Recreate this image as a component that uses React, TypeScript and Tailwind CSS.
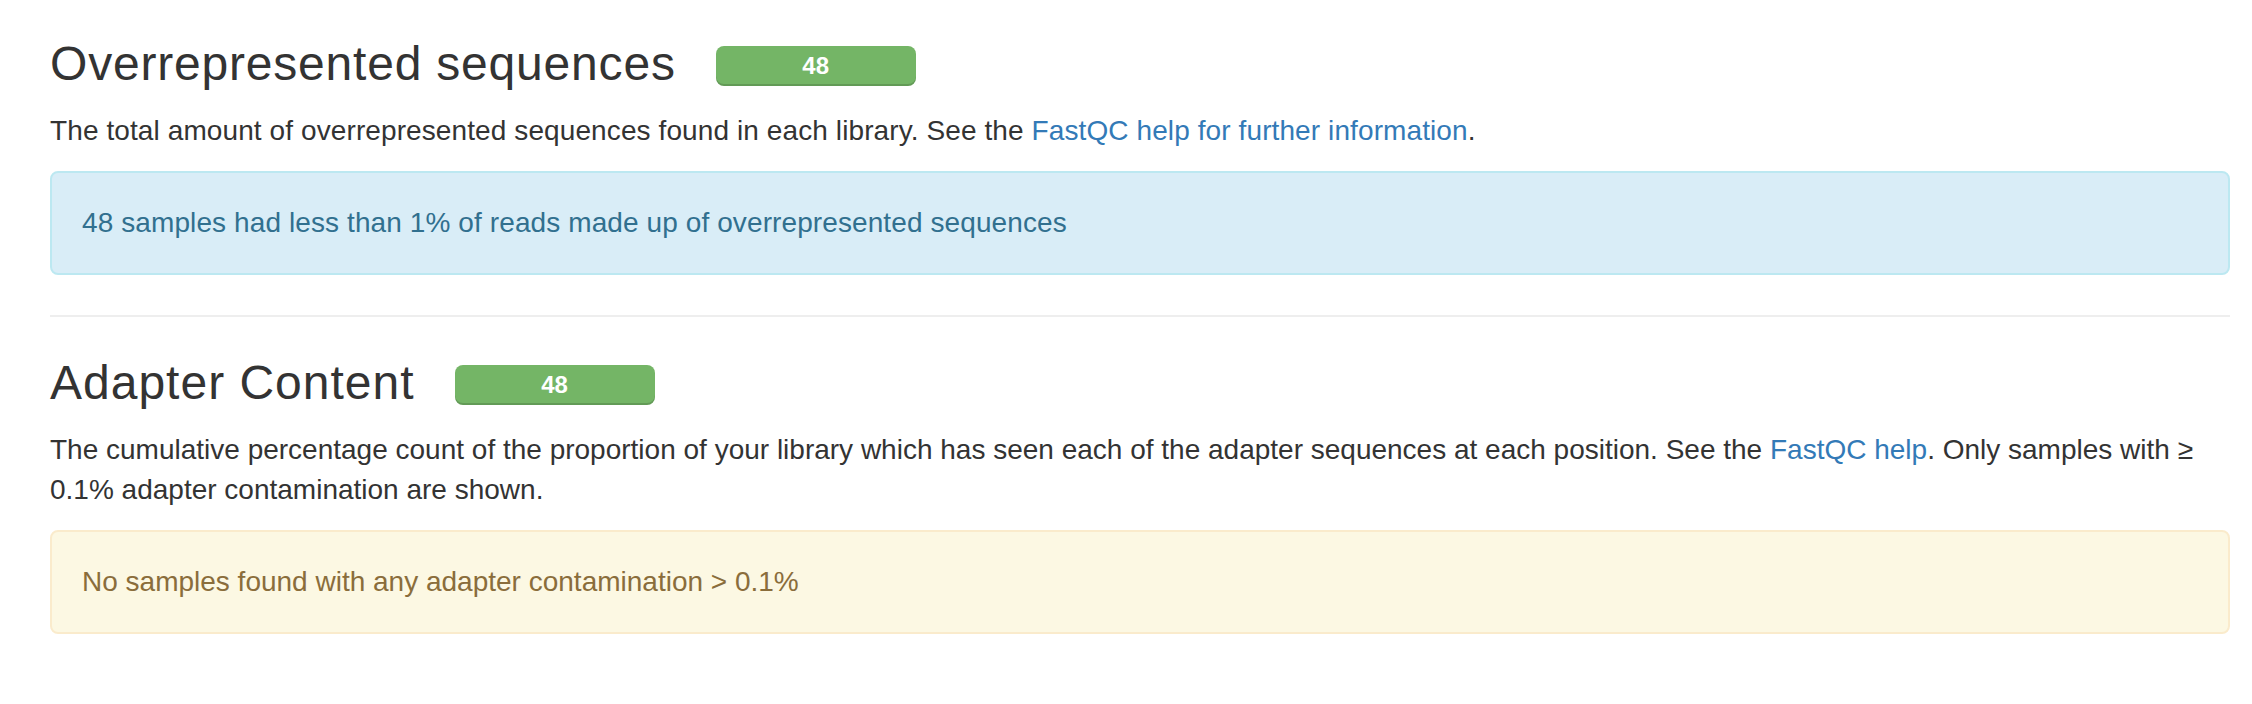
import React from "react";

function Badge({ value }: { value: string }) {
  return (
    <div className="ml-[40px] mt-[8px] h-[40px] w-[200px] shrink-0 rounded-[8px] bg-[#74b566] text-center text-[24px] font-bold leading-[40px] text-white shadow-[inset_0_-2px_0_rgba(0,0,0,0.15)]">
      {value}
    </div>
  );
}

export default function App() {
  return (
    <div className="min-h-[704px] bg-white pl-[50px] pr-[22px] pt-[38px] font-['Liberation_Sans',Arial,sans-serif] text-[#333]">
      <section>
        <div className="flex items-start">
          <h3 className="text-[48px] font-medium leading-[52.8px] tracking-[0.8px]">Overrepresented sequences</h3>
          <Badge value="48" />
        </div>
        <p className="mb-[20px] mt-[20px] text-[28px] leading-[40px] tracking-[0.1px]">
          The total amount of overrepresented sequences found in each library. See the{" "}
          <a className="text-[#337ab7]" href="#">
            FastQC help for further information
          </a>
          .
        </p>
        <div className="rounded-[8px] border-2 border-[#bce8f1] bg-[#d9edf7] p-[30px] text-[28px] leading-[40px] tracking-[0.1px] text-[#31708f]">
          48 samples had less than 1% of reads made up of overrepresented sequences
        </div>
      </section>
      <hr className="my-[40px] border-0 border-t-2 border-[#eeeeee]" />
      <section>
        <div className="flex items-start">
          <h3 className="text-[48px] font-medium leading-[52.8px] tracking-[1px]">Adapter Content</h3>
          <Badge value="48" />
        </div>
        <p className="mb-[20px] mt-[20px] text-[28px] leading-[40px]">
          The cumulative percentage count of the proportion of your library which has seen each of the adapter
          sequences at each position. See the{" "}
          <a className="text-[#337ab7]" href="#">
            FastQC help
          </a>
          . Only samples with ≥ 0.1% adapter contamination are shown.
        </p>
        <div className="rounded-[8px] border-2 border-[#faebcc] bg-[#fcf8e3] p-[30px] text-[28px] leading-[40px] text-[#8a6d3b]">
          No samples found with any adapter contamination &gt; 0.1%
        </div>
      </section>
    </div>
  );
}
